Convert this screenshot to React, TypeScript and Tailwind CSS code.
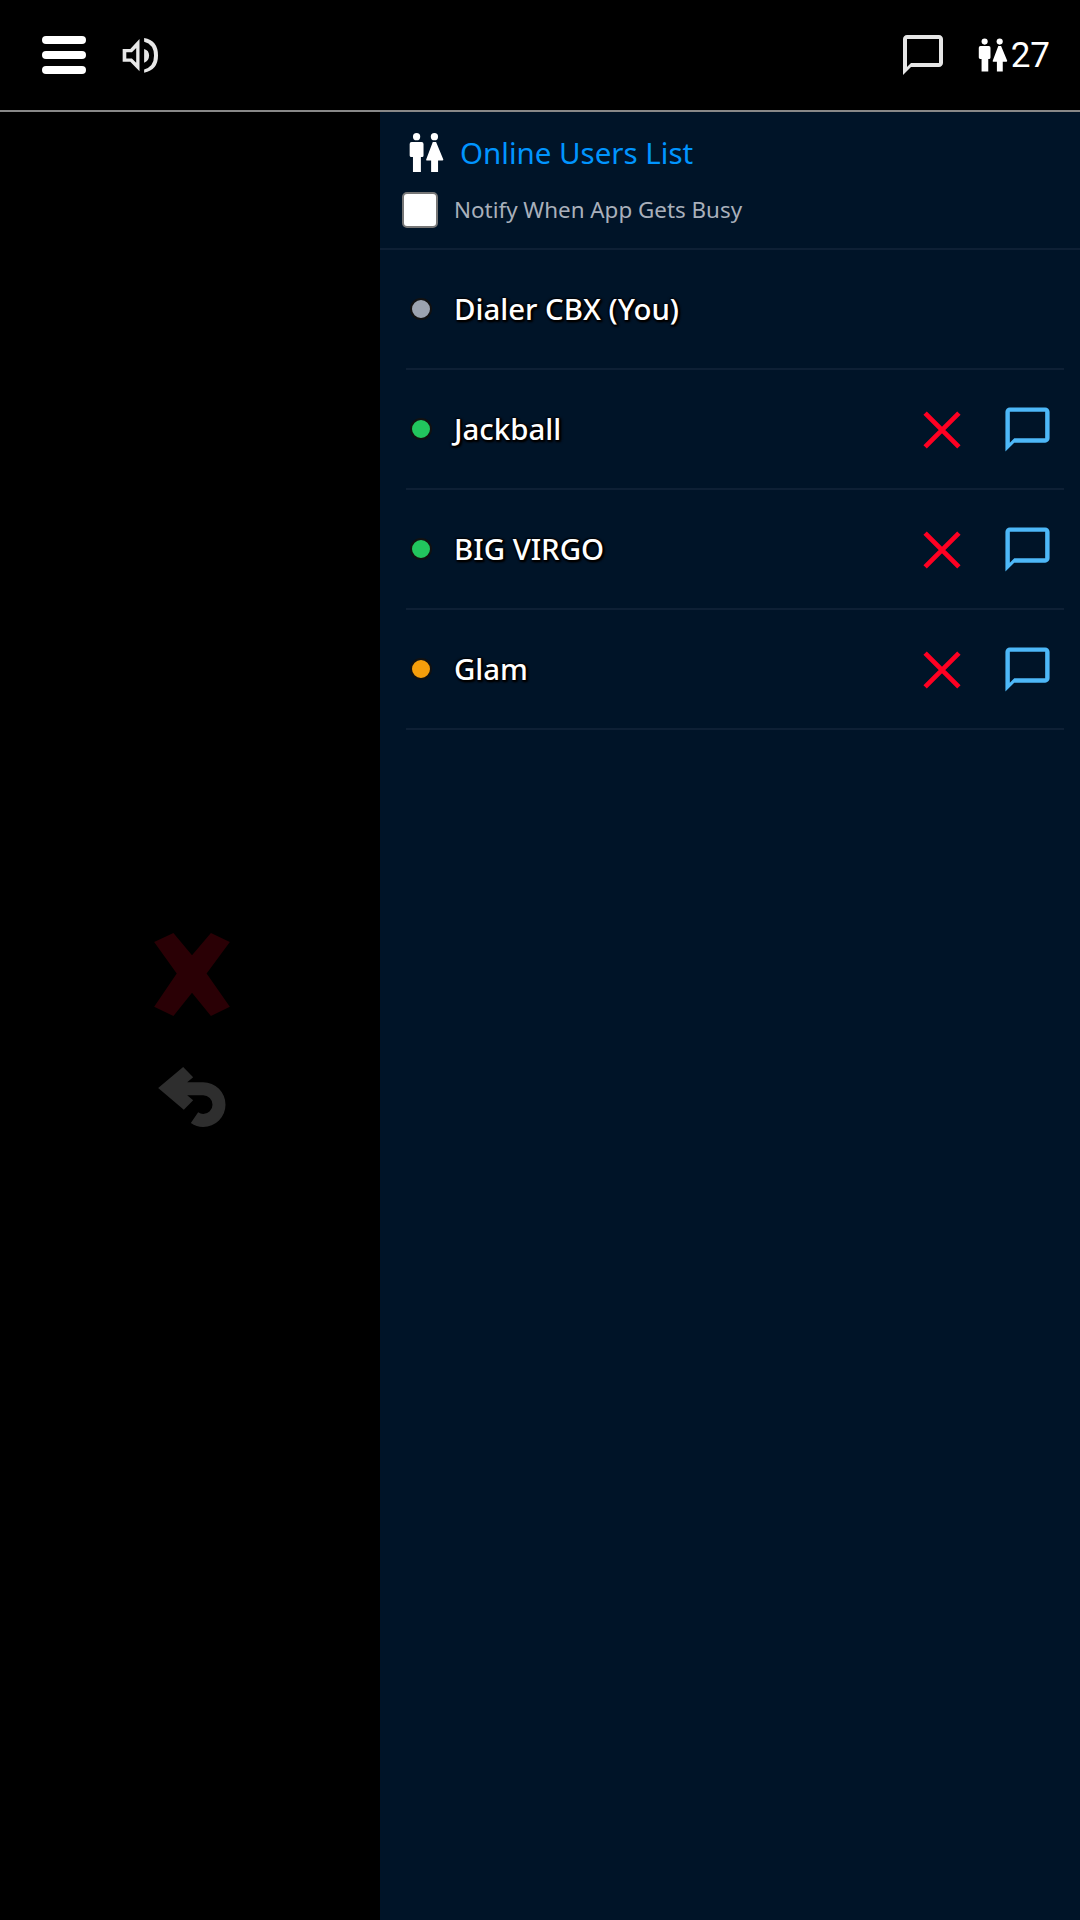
const FONT = "font-['Noto_Sans',sans-serif]"

const USERS = [
  { name: 'Dialer CBX (You)', dot: 'bg-[#9ca3af]', self: true },
  { name: 'Jackball', dot: 'bg-[#22c55e]', self: false },
  { name: 'BIG VIRGO', dot: 'bg-[#22c55e]', self: false },
  { name: 'Glam', dot: 'bg-[#f59e0b]', self: false },
]

function ChatIcon({ className }: { className?: string }) {
  return (
    <svg viewBox="0 0 24 24" fill="currentColor" className={className}>
      <path d="M20 2H4c-1.1 0-2 .9-2 2v18l4-4h14c1.1 0 2-.9 2-2V4c0-1.1-.9-2-2-2zm0 14H6l-2 2V4h16v12z" />
    </svg>
  )
}

function PeopleIcon({ className }: { className?: string }) {
  return (
    <svg viewBox="88 66 106 122" fill="currentColor" className={className}>
      <circle cx="111" cy="79" r="11" />
      <path d="M96 95H126Q132 95 132 101V136Q132 141 128 141H124V186H100V141H95Q90 141 90 136V101Q90 95 96 95Z" />
      <circle cx="165" cy="79" r="11" />
      <path d="M160 95H170L192 148Q192 151 189 151H176V186H155V151H142Q139 151 140 148Z" />
    </svg>
  )
}

function SpeakerIcon({ className }: { className?: string }) {
  return (
    <svg viewBox="365 113 112 110" fill="currentColor" className={className}>
      <path
        fillRule="evenodd"
        d="M367 148H390L418 118V216L390 187H367ZM378 158V177H395L408 190V145L395 158Z"
      />
      <path d="M432 148Q447 152 447 168Q447 184 432 190Z" />
      <path d="M432 115Q474 122 474 168Q474 212 432 220V210Q462 202 462 168Q462 134 432 126Z" />
    </svg>
  )
}

function CrossIcon({ className }: { className?: string }) {
  return (
    <svg viewBox="0 0 36 36" className={className}>
      <path d="M2 2L34 34M34 2L2 34" stroke="currentColor" strokeWidth="4.5" />
    </svg>
  )
}

export default function App() {
  return (
    <div className={`w-[1080px] h-[1920px] bg-black flex flex-col ${FONT}`}>
      {/* top bar */}
      <header className="h-[112px] shrink-0 border-b-2 border-[#888888] flex items-center justify-between pl-[42px] pr-[30px]">
        <div className="flex items-center gap-[36px]">
          <div className="w-[44px] flex flex-col gap-[7px]">
            <div className="h-[8px] rounded-full bg-white" />
            <div className="h-[8px] rounded-full bg-white" />
            <div className="h-[8px] rounded-full bg-white" />
          </div>
          <SpeakerIcon className="w-[37px] h-[37px] text-[#e8e8e8]" />
        </div>
        <div className="flex items-center">
          <ChatIcon className="w-[48px] h-[48px] text-[#e6e6e6] mr-[31px]" />
          <PeopleIcon className="w-[30px] h-[34px] text-white mr-[3px]" />
          <span className="font-['Roboto',sans-serif] text-[35px] leading-none text-white">27</span>
        </div>
      </header>

      <div className="flex flex-1 min-h-0">
        {/* dimmed actions */}
        <aside className="w-[380px] shrink-0 flex flex-col items-center pt-[821px]">
          <svg viewBox="72 68 228 250" className="w-[76px] h-[83px] ml-[4px]" fill="#2a0005">
            <path d="M72 95L130 68L186 135L243 68L300 95L230 190L300 290L243 318L186 248L130 318L72 290L140 190Z" />
          </svg>
          <svg viewBox="85 472 203 180" className="w-[68px] h-[60px] mt-[51px] ml-[4px]" fill="#2e2e2e">
            <path d="M85 535L160 472L190 503L172 518H220A67 67 0 0 1 220 652Q200 652 183 640L205 608Q212 613 220 613A28 28 0 0 0 220 557H172L190 572L162 600Z" />
          </svg>
        </aside>

        {/* online users */}
        <section className="flex-1 bg-[#001428]">
          <div className="h-[138px] border-b-2 border-[#0e2035] pl-[22px] flex flex-col">
            <div className="flex items-center mt-[20px] ml-[7px]">
              <PeopleIcon className="w-[35px] h-[41px] text-white" />
              <h2 className="ml-[16px] text-[29.5px] leading-[41px] text-[#0095ff]">Online Users List</h2>
            </div>
            <div className="flex items-center mt-[19px]">
              <div className="w-[36px] h-[36px] rounded-[5px] bg-white border-2 border-[#767676]" />
              <span className="ml-[16px] text-[22.4px] leading-[36px] text-[#a9b0bb]">Notify When App Gets Busy</span>
            </div>
          </div>

          <ul className="pl-[26px] pr-[16px]">
            {USERS.map(user => (
              <li key={user.name} className="h-[120px] border-b-2 border-[#0e2035] flex items-center">
                <span className={`w-[22px] h-[22px] ml-[4px] rounded-full border-2 border-[#111111] ${user.dot}`} />
                <span className="ml-[22px] flex-1 text-[29.4px] font-medium text-white [text-shadow:2px_2px_2px_#000,-1px_-1px_2px_#000,2px_0_2px_#000,0_2px_2px_#000]">
                  {user.name}
                </span>
                {!user.self && (
                  <div className="flex items-center pt-[1px]">
                    <CrossIcon className="w-[38px] h-[38px] text-[#ff0022]" />
                    <ChatIcon className="w-[53px] h-[53px] text-[#4db8f8] ml-[40px] mr-[10px]" />
                  </div>
                )}
              </li>
            ))}
          </ul>
        </section>
      </div>
    </div>
  )
}
